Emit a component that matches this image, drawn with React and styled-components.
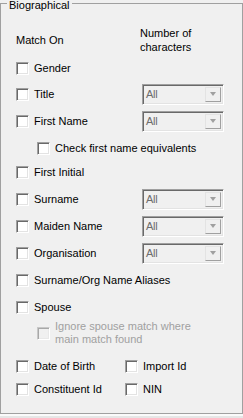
import React from 'react';
import styled, { createGlobalStyle } from 'styled-components';

const GlobalStyle = createGlobalStyle`
    html, body {
        margin: 0;
        padding: 0;
        background: #f0f0f0;
    }
    body {
        font-family: "Liberation Sans", Arial, sans-serif;
        font-size: 11px;
        color: #000;
    }
`;

const GroupBox = styled.div`
    position: relative;
    box-sizing: border-box;
    margin-top: 3px;
    width: 243px;
    height: 411px;
    border: 1px solid #a0a0a0;
`;

const Legend = styled.span`
    position: absolute;
    top: -4px;
    left: 6px;
    padding: 0 2px 0 2px;
    line-height: 11px;
    background: #f0f0f0;
    color: #000;
`;

const Content = styled.div`
    display: flex;
    flex-direction: column;
    padding-left: 15px;
`;

const Header = styled.div`
    display: flex;
    margin-top: 22px;
    height: 28px;
`;

const HeaderText = styled.div`
    width: ${p => p.width || 'auto'};
    padding-top: ${p => p.offset || 0}px;
    line-height: ${p => p.lh || 13}px;
`;

const Row = styled.div`
    display: flex;
    align-items: center;
    height: ${p => p.height || 13}px;
    margin-top: ${p => p.gap}px;
    padding-left: ${p => p.indent || 0}px;
`;

const Cell = styled.div`
    flex: none;
    width: ${p => p.width}px;
    display: flex;
    align-items: center;
`;

const Option = styled.label`
    display: flex;
    align-items: center;
    gap: 5px;
    line-height: 13px;
    white-space: nowrap;
    color: ${p => (p.disabled ? '#a0a0a0' : '#000')};
`;

const Box = styled.span`
    flex: none;
    box-sizing: border-box;
    width: 13px;
    height: 13px;
    border: 1px solid;
    border-color: #a0a0a0 #ffffff #ffffff #a0a0a0;
    box-shadow: inset 1px 1px 0 #696969, inset -1px -1px 0 #e3e3e3;
    background: ${p => (p.disabled ? '#f0f0f0' : '#ffffff')};
    ${p => p.disabled && `
        border-color: #c8c8c8 #ffffff #ffffff #c8c8c8;
        box-shadow: inset 1px 1px 0 #a8a8a8, inset -1px -1px 0 #e8e8e8;
    `}
`;

const Combo = styled.div`
    flex: none;
    box-sizing: border-box;
    width: 82px;
    height: 21px;
    margin-top: -1px;
    border: 1px solid;
    border-color: #a0a0a0 #ffffff #ffffff #a0a0a0;
    box-shadow: inset 1px 1px 0 #696969, inset -1px -1px 0 #e3e3e3;
    background: #f0f0f0;
    display: flex;
    align-items: center;
    padding: 2px 2px 2px 3px;
`;

const ComboText = styled.span`
    flex: 1;
    color: #6d6d6d;
    line-height: 13px;
    letter-spacing: -0.3px;
`;

const ComboButton = styled.span`
    box-sizing: border-box;
    width: 16px;
    height: 15px;
    display: flex;
    align-items: center;
    justify-content: center;
    border: 1px solid;
    border-color: #e3e3e3 #a0a0a0 #a0a0a0 #e3e3e3;
    background: #f0f0f0;
`;

const Arrow = styled.span`
    width: 0;
    height: 0;
    border-left: 3.5px solid transparent;
    border-right: 3.5px solid transparent;
    border-top: 4px solid #a0a0a0;
`;

const Shelf = styled.div`
    height: 4px;
    border-top: 2px solid #fafafa;
    box-sizing: border-box;
    background: #e6e6e6;
`;

function Check({ label, disabled }) {
    return (
        <Option disabled={disabled}>
            <Box disabled={disabled} />
            <span>{label}</span>
        </Option>
    );
}

function Dropdown() {
    return (
        <Combo>
            <ComboText>All</ComboText>
            <ComboButton><Arrow /></ComboButton>
        </Combo>
    );
}

const rows = [
    { label: 'Gender', gap: 8 },
    { label: 'Title', gap: 13, combo: true },
    { label: 'First Name', gap: 14, combo: true },
    { label: 'Check first name equivalents', gap: 14, indent: 21 },
    { label: 'First Initial', gap: 11 },
    { label: 'Surname', gap: 14, combo: true },
    { label: 'Maiden Name', gap: 14, combo: true },
    { label: 'Organisation', gap: 14, combo: true },
    { label: 'Surname/Org Name Aliases', gap: 14 },
    { label: 'Spouse', gap: 14 },
];

function App() {
    return (
        <>
            <GlobalStyle />
            <GroupBox>
                <Legend>Biographical</Legend>
                <Content>
                    <Header>
                        <HeaderText width="124px" offset={8}>Match On</HeaderText>
                        <HeaderText lh={14}>Number of<br />characters</HeaderText>
                    </Header>
                    {rows.map(row => (
                        <Row key={row.label} gap={row.gap} indent={row.indent}>
                            <Cell width={126}>
                                <Check label={row.label} />
                            </Cell>
                            {row.combo && <Dropdown />}
                        </Row>
                    ))}
                    <Row gap={6} height={26} indent={21}>
                        <Check disabled label={<>Ignore spouse match where<br />main match found</>} />
                    </Row>
                    <Row gap={14}>
                        <Cell width={109}><Check label="Date of Birth" /></Cell>
                        <Check label="Import Id" />
                    </Row>
                    <Row gap={10}>
                        <Cell width={109}><Check label="Constituent Id" /></Cell>
                        <Check label="NIN" />
                    </Row>
                </Content>
            </GroupBox>
            <Shelf />
        </>
    );
}

export default App;
